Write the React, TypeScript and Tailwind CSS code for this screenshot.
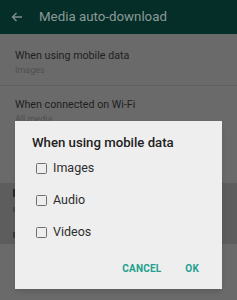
import React from "react";

function Checkbox() {
  return <span className="block w-[11px] h-[11px] border-[1.5px] border-[#6f6f6f] rounded-[1.5px] shrink-0" />;
}

export default function App() {
  const options = ["Images", "Audio", "Videos"];
  return (
    <div
      className="relative w-[237px] h-[300px] overflow-hidden bg-[#6a6a6a]"
      style={{ fontFamily: "Roboto, 'Noto Sans', sans-serif" }}
    >
      <div className="h-[34px] bg-[#052e28] flex items-center">
        <svg width="12" height="10" viewBox="0 0 12 10" className="ml-[11px]" fill="none">
          <path d="M11 5H1.5M5.5 1L1.5 5l4 4" stroke="#7e8f8b" strokeWidth="1.4" />
        </svg>
        <span className="ml-[16px] text-[13.3px] text-[#8b9a97] leading-none">Media auto-download</span>
      </div>
      <div className="px-[15px] pt-[15px] pb-[9px] border-b border-[#5f5f5f]">
        <div className="text-[10.7px] leading-[14px] text-[#1f1f1f]">When using mobile data</div>
        <div className="text-[9px] leading-[12px] text-[#4f4f4f] mt-[1px]">Images</div>
      </div>
      <div className="px-[15px] pt-[12px] h-[97px]">
        <div className="text-[10.7px] leading-[14px] text-[#1f1f1f]">When connected on Wi-Fi</div>
        <div className="text-[9px] leading-[12px] text-[#4f4f4f] mt-[1px]">All media</div>
      </div>
      <div className="h-[61px] bg-[#5d5d5d] pl-[13px] pt-[6px] flex flex-col gap-[6px]">
        <span className="block w-[3px] h-[8px] bg-[#2a2a2a]" />
        <span className="block w-[3px] h-[5px] bg-[#4a4a4a] mt-[4px]" />
        <span className="block w-[3px] h-[6px] bg-[#3a3a3a] mt-[14px]" />
      </div>

      <div className="absolute left-[15px] top-[121px] w-[207px] h-[168px] bg-[#eeeeee] shadow-md">
        <div className="pl-[17px] pt-[13px] text-[13.2px] leading-[18px] font-medium text-[#212121]">
          When using mobile data
        </div>
        <div>
          {options.map((o) => (
            <div key={o} className="flex items-center h-[32px] pl-[21px]">
              <Checkbox />
              <span className="ml-[6px] text-[12.5px] text-[#2e2e2e]">{o}</span>
            </div>
          ))}
        </div>
        <div className="flex justify-end items-center mt-[13px] pr-[23px] gap-[24px] text-[10px] font-bold text-[#23a08f] tracking-[0.2px]">
          <span>CANCEL</span>
          <span>OK</span>
        </div>
      </div>
    </div>
  );
}
